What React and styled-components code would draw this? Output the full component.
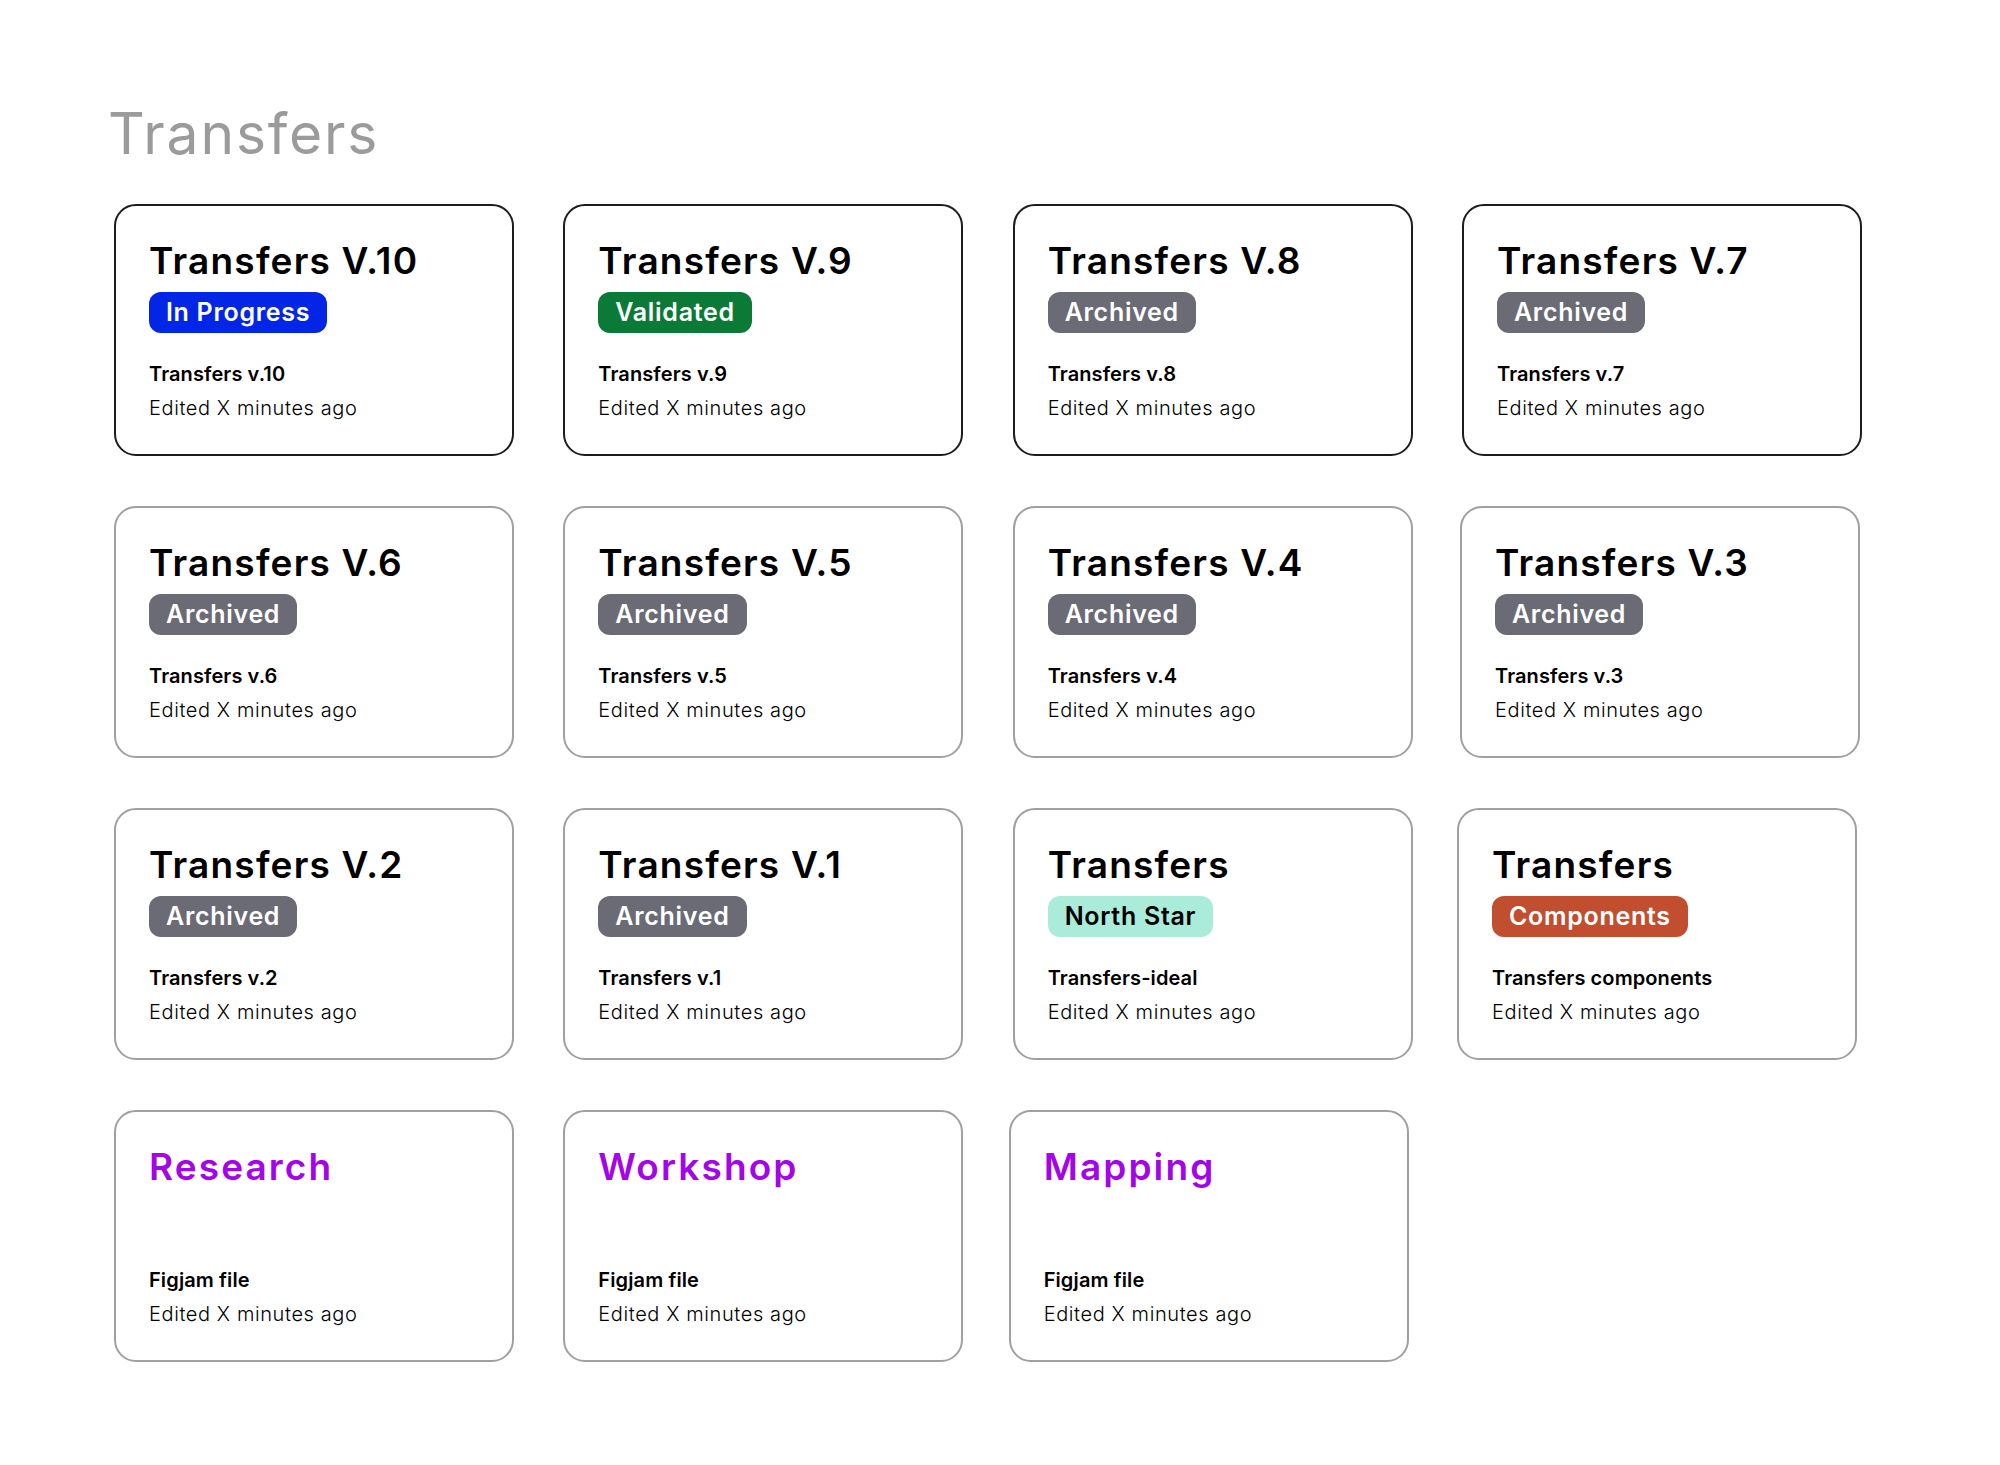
import React from "react";
import styled, { createGlobalStyle } from "styled-components";

const GlobalStyle = createGlobalStyle`
  html, body { margin: 0; padding: 0; background: #ffffff; }
  body { font-family: Inter, "Open Sans", sans-serif; color: #000; }
  * { box-sizing: border-box; }
`;

const Page = styled.main`
  width: 2000px;
  min-height: 1465px;
  padding: 105px 0 0 114px;
  background: #fff;
`;

const Heading = styled.h1`
  margin: 0 0 42px -6px;
  font-family: Inter, sans-serif;
  font-size: 57px;
  line-height: 1;
  font-weight: 400;
  color: #9b9b9b;
  letter-spacing: 1.8px;
`;

const Grid = styled.section`
  display: grid;
  grid-template-columns: repeat(4, 400px);
  grid-auto-rows: 252px;
  column-gap: 49.33px;
  row-gap: 50px;
`;

const Card = styled.article`
  display: flex;
  flex-direction: column;
  align-items: flex-start;
  height: 252px;
  padding: 36px 16px 0 33px;
  border: 2px solid ${(p) => (p.$dark ? "#1c1c1c" : "#a0a0a0")};
  border-radius: 22px;
  background: #fff;
  margin-left: ${(p) => p.$shift || 0}px;
  margin-right: ${(p) => -(p.$shift || 0)}px;
`;

const Title = styled.h2`
  margin: 0;
  font-size: 37px;
  line-height: 1;
  font-weight: 600;
  letter-spacing: ${(p) => (p.$accent ? "2.1px" : "1.2px")};
  white-space: nowrap;
  color: ${(p) => (p.$accent ? "#a306e6" : "#000")};
`;

const BADGE = {
  progress: { bg: "#0326e6", fg: "#fff" },
  validated: { bg: "#0b7a36", fg: "#fff" },
  archived: { bg: "#6b6b76", fg: "#fff" },
  north: { bg: "#aaecd9", fg: "#000" },
  components: { bg: "#c14f2f", fg: "#fff" },
};

const Badge = styled.span`
  display: inline-flex;
  align-items: center;
  height: 41px;
  margin-top: 13px;
  padding: 0 17px 1px;
  border-radius: 12px;
  font-size: 25px;
  font-weight: 600;
  line-height: 1;
  letter-spacing: 0.7px;
  white-space: nowrap;
  background: ${(p) => BADGE[p.$kind].bg};
  color: ${(p) => BADGE[p.$kind].fg};
`;

const BadgeSpacer = styled.div`
  height: 41px;
  margin-top: 13px;
`;

const FileName = styled.div`
  margin-top: 31px;
  font-size: 20px;
  line-height: 1;
  font-weight: 600;
  letter-spacing: 0.1px;
  white-space: nowrap;
`;

const Edited = styled.div`
  margin-top: 14px;
  font-size: 20px;
  line-height: 1;
  font-weight: 300;
  letter-spacing: 0.6px;
  white-space: nowrap;
`;

const cards = [
  { title: "Transfers V.10", badge: "progress", label: "In Progress", file: "Transfers v.10", dark: true },
  { title: "Transfers V.9", badge: "validated", label: "Validated", file: "Transfers v.9", dark: true },
  { title: "Transfers V.8", badge: "archived", label: "Archived", file: "Transfers v.8", dark: true },
  { title: "Transfers V.7", badge: "archived", label: "Archived", file: "Transfers v.7", dark: true },
  { title: "Transfers V.6", badge: "archived", label: "Archived", file: "Transfers v.6" },
  { title: "Transfers V.5", badge: "archived", label: "Archived", file: "Transfers v.5" },
  { title: "Transfers V.4", badge: "archived", label: "Archived", file: "Transfers v.4" },
  { title: "Transfers V.3", badge: "archived", label: "Archived", file: "Transfers v.3", shift: -2 },
  { title: "Transfers V.2", badge: "archived", label: "Archived", file: "Transfers v.2" },
  { title: "Transfers V.1", badge: "archived", label: "Archived", file: "Transfers v.1" },
  { title: "Transfers", badge: "north", label: "North Star", file: "Transfers-ideal" },
  { title: "Transfers", badge: "components", label: "Components", file: "Transfers components", shift: -5 },
  { title: "Research", file: "Figjam file", accent: true },
  { title: "Workshop", file: "Figjam file", accent: true },
  { title: "Mapping", file: "Figjam file", accent: true, shift: -4 },
];

export default function App() {
  return (
    <>
      <GlobalStyle />
      <Page>
        <Heading>Transfers</Heading>
        <Grid>
          {cards.map((c, i) => (
            <Card key={i} $dark={c.dark} $shift={c.shift}>
              <Title $accent={c.accent}>{c.title}</Title>
              {c.badge ? <Badge $kind={c.badge}>{c.label}</Badge> : <BadgeSpacer />}
              <FileName>{c.file}</FileName>
              <Edited>Edited X minutes ago</Edited>
            </Card>
          ))}
        </Grid>
      </Page>
    </>
  );
}
